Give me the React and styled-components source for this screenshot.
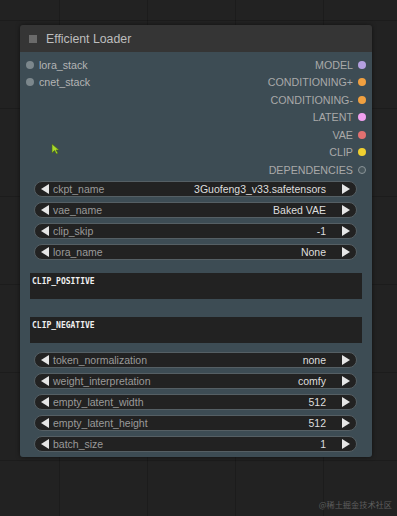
import React from 'react';
import styled, { createGlobalStyle } from 'styled-components';

const GlobalStyle = createGlobalStyle`
	html, body {
		margin: 0;
		padding: 0;
	}
	body {
		width: 397px;
		height: 516px;
		overflow: hidden;
		font-family: "Liberation Sans", Arial, sans-serif;
		background-color: #222222;
		background-image:
			linear-gradient(to right, rgba(0, 0, 0, 0.18) 1px, transparent 1px),
			linear-gradient(to bottom, rgba(0, 0, 0, 0.18) 1px, transparent 1px);
		background-size: 88px 88px;
		background-position: 59px 20px;
	}
`;

const Canvas = styled.div`
	position: relative;
	width: 397px;
	height: 516px;
	padding: 25px 0 0 20px;
	box-sizing: border-box;
`;

const Node = styled.div`
	width: 352px;
	border-radius: 3px;
	overflow: hidden;
	box-shadow: 0 0 4px rgba(0, 0, 0, 0.5);
`;

const TitleBar = styled.div`
	display: flex;
	align-items: center;
	gap: 9px;
	height: 27px;
	padding-left: 9px;
	background: #353535;
	color: #bdbdbd;
	font-size: 12.3px;
`;

const TitleBox = styled.span`
	width: 8px;
	height: 8px;
	background: #6a6a6a;
`;

const Body = styled.div`
	position: relative;
	display: flex;
	flex-direction: column;
	padding: 4px 0 5px;
	background: #3d4c54;
`;

const Slots = styled.div`
	display: flex;
	justify-content: space-between;
	margin-bottom: 2px;
`;

const SlotColumn = styled.div`
	display: flex;
	flex-direction: column;
	align-items: ${(p) => (p.right ? 'flex-end' : 'flex-start')};
`;

const Slot = styled.div`
	display: flex;
	align-items: center;
	gap: 5px;
	height: 17.5px;
	padding: ${(p) => (p.right ? '0 6px 0 0' : '0 0 0 6px')};
	color: ${(p) => (p.right ? '#a9a9a9' : '#b4b4b4')};
	font-size: 10.7px;
`;

const Dot = styled.span`
	width: 6px;
	height: 6px;
	border-radius: 50%;
	background: ${(p) => p.color};
	border: 1px solid ${(p) => p.ring || 'transparent'};
	box-sizing: content-box;
	order: ${(p) => (p.right ? 1 : 0)};
`;

const Widgets = styled.div`
	display: flex;
	flex-direction: column;
	gap: 5px;
	margin: ${(p) => p.margin || '0'};
`;

const Combo = styled.div`
	display: flex;
	align-items: center;
	height: 16px;
	margin: 0 15px 0 14px;
	padding: 0 6px;
	border: 1px solid #555f64;
	border-radius: 9px;
	background: #222;
	font-size: 10.5px;
	box-sizing: border-box;
`;

const Arrow = styled.span`
	width: 0;
	height: 0;
	border-top: 5px solid transparent;
	border-bottom: 5px solid transparent;
	${(p) => (p.right ? 'border-left: 8px solid #e6e6e6;' : 'border-right: 8px solid #e6e6e6;')}
`;

const Label = styled.span`
	flex: 1;
	margin-left: 4px;
	color: #9a9a9a;
`;

const Value = styled.span`
	margin-right: 16px;
	color: #dedede;
`;

const TextArea = styled.div`
	height: 26px;
	margin: ${(p) => p.margin};
	padding: 4px 2px;
	box-sizing: border-box;
	background: #222;
	color: #f0f0f0;
	font-family: "DejaVu Sans Mono", monospace;
	font-weight: bold;
	font-size: 8px;
`;

const Cursor = styled.svg`
	position: absolute;
	left: 31px;
	top: 91px;
`;

const Watermark = styled.div`
	position: absolute;
	right: 5px;
	bottom: 6px;
	color: #5e5e5e;
	font-size: 8.2px;
	font-family: "Noto Sans CJK SC", sans-serif;
`;

const inputs = ['lora_stack', 'cnet_stack'];

const outputs = [
	{ name: 'MODEL', color: '#b4a0e0' },
	{ name: 'CONDITIONING+', color: '#f0a040' },
	{ name: 'CONDITIONING-', color: '#f0a040' },
	{ name: 'LATENT', color: '#f0a0f0' },
	{ name: 'VAE', color: '#e07070' },
	{ name: 'CLIP', color: '#f0d030' },
	{ name: 'DEPENDENCIES', color: '#48565c', ring: '#8a9498' },
];

const topWidgets = [
	['ckpt_name', '3Guofeng3_v33.safetensors'],
	['vae_name', 'Baked VAE'],
	['clip_skip', '-1'],
	['lora_name', 'None'],
];

const bottomWidgets = [
	['token_normalization', 'none'],
	['weight_interpretation', 'comfy'],
	['empty_latent_width', '512'],
	['empty_latent_height', '512'],
	['batch_size', '1'],
];

const ComboWidget = ({ label, value }) => (
	<Combo>
		<Arrow />
		<Label>{label}</Label>
		<Value>{value}</Value>
		<Arrow right />
	</Combo>
);

export default function App() {
	return (
		<Canvas>
			<GlobalStyle />
			<Node>
				<TitleBar>
					<TitleBox />
					Efficient Loader
				</TitleBar>
				<Body>
					<Slots>
						<SlotColumn>
							{inputs.map((n) => (
								<Slot key={n}>
									<Dot color="#7c878c" />
									{n}
								</Slot>
							))}
						</SlotColumn>
						<SlotColumn right>
							{outputs.map((o) => (
								<Slot right key={o.name}>
									<Dot right color={o.color} ring={o.ring} />
									{o.name}
								</Slot>
							))}
						</SlotColumn>
					</Slots>
					<Widgets>
						{topWidgets.map(([l, v]) => (
							<ComboWidget key={l} label={l} value={v} />
						))}
					</Widgets>
					<TextArea margin="13px 10px 0">CLIP_POSITIVE</TextArea>
					<TextArea margin="18px 10px 0">CLIP_NEGATIVE</TextArea>
					<Widgets margin="9px 0 0">
						{bottomWidgets.map(([l, v]) => (
							<ComboWidget key={l} label={l} value={v} />
						))}
					</Widgets>
					<Cursor width="9" height="12" viewBox="0 0 9 12">
						<path d="M1 1 L1 10 L3.5 7.5 L5.5 11 L7 10.3 L5 7 L8 7 Z" fill="#a8d82c" stroke="#4a6a10" strokeWidth="0.6" />
					</Cursor>
				</Body>
			</Node>
			<Watermark>@稀土掘金技术社区</Watermark>
		</Canvas>
	);
}
